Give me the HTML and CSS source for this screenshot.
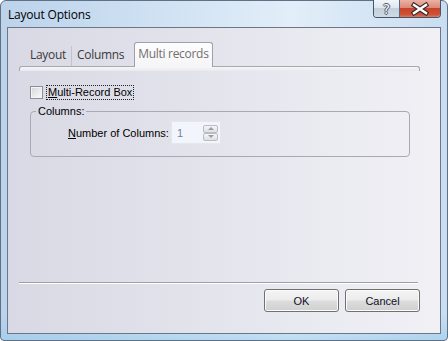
FILE: index.html
```html
<!DOCTYPE html>
<html>
<head>
<meta charset="utf-8">
<title>Layout Options</title>
<link rel="stylesheet" href="styles.css">
</head>
<body>
<div class="window">
  <div class="titlebar">
    <span class="title">Layout Options</span>
    <div class="caps">
      <div class="cap help"><span>?</span></div>
      <div class="cap close">
        <svg width="40" height="18" viewBox="0 0 40 18">
          <path d="M14 5 L26 13 M26 5 L14 13" stroke="#3a2a28" stroke-width="4.6" stroke-linecap="square" fill="none"/>
          <path d="M14 5 L26 13 M26 5 L14 13" stroke="#ffffff" stroke-width="2.4" stroke-linecap="square" fill="none"/>
        </svg>
      </div>
    </div>
  </div>
  <div class="client">
    <div class="tabs">
      <div class="tab first">Layout</div>
      <div class="tab-sep"></div>
      <div class="tab">Columns</div>
      <div class="tab selected">Multi records</div>
    </div>
    <div class="tab-strip"></div>

    <div class="check-row">
      <span class="checkbox"></span>
      <span class="focus"><u>M</u>ulti-Record Box</span>
    </div>

    <fieldset class="group">
      <legend>Columns:</legend>
      <div class="field-row">
        <span class="field-label"><u>N</u>umber of Columns:</span>
        <div class="spin">
          <span class="spin-val">1</span>
          <div class="spin-btns">
            <div class="spin-btn up"></div>
            <div class="spin-btn down"></div>
          </div>
        </div>
      </div>
    </fieldset>

    <div class="separator"></div>
    <div class="buttons">
      <button class="btn">OK</button>
      <button class="btn">Cancel</button>
    </div>
  </div>
</div>
</body>
</html>
```

FILE: styles.css
```css
* { box-sizing: border-box; }
html, body { margin: 0; padding: 0; }
body {
  width: 448px;
  height: 341px;
  overflow: hidden;
  background: #ffffff;
  font-family: "Liberation Sans", Arial, sans-serif;
  font-size: 11px;
  color: #000;
}

.window {
  width: 448px;
  height: 341px;
  border: 1px solid #5f7184;
  border-radius: 6px 6px 4px 4px;
  background:
    linear-gradient(to bottom, rgba(255,255,255,0) 0%, rgba(255,255,255,0) 92%, rgba(140,200,235,0.45) 100%),
    linear-gradient(to right, #bcd3eb 0%, #d2e3f4 40%, #e2eef9 65%, #c9ddf1 100%);
  display: flex;
  flex-direction: column;
  padding: 0 6px 6px 6px;
}

.titlebar {
  height: 26px;
  display: flex;
  align-items: center;
  justify-content: space-between;
  flex: none;
}
.title {
  font-family: "Open Sans", "Noto Sans", sans-serif;
  font-size: 12px;
  color: #000;
  padding-left: 1px;
  letter-spacing: -0.2px;
}

.caps {
  align-self: flex-start;
  margin-top: -1px;
  display: flex;
  height: 18px;
  border: 1px solid #46566a;
  border-top: none;
  border-radius: 0 0 4px 4px;
  overflow: hidden;
}
.cap { height: 100%; display: flex; align-items: center; justify-content: center; }
.help {
  width: 26px;
  border-right: 1px solid #5a697a;
  background: linear-gradient(to bottom, #f2f6fa 0%, #dfe7ef 45%, #c3cfdb 50%, #cfdae5 100%);
}
.help span {
  font-family: "DejaVu Sans", sans-serif;
  font-size: 14px;
  line-height: 14px;
  color: #f4f7fa;
  text-shadow: 1px 0 0 #4d5864, -1px 0 0 #4d5864, 0 1px 0 #4d5864, 0 -1px 0 #4d5864;
}
.close {
  width: 40px;
  background: linear-gradient(to bottom, #eab3a6 0%, #dd8a76 45%, #c8432c 50%, #cd5237 85%, #dc7a5a 100%);
}
.close svg { display: block; }

.client {
  flex: 1;
  border: 1px solid #6c7785;
  background: linear-gradient(to right, #d9d9e5 0%, #e2e2eb 40%, #ebebf2 75%, #f0f0f5 100%);
  display: flex;
  flex-direction: column;
  padding: 14px 0 21px 11px;
}

.tabs {
  display: flex;
  align-items: flex-end;
  height: 24px;
  width: 401px;
  position: relative;
  z-index: 1;
  font-family: "Open Sans", "Noto Sans", sans-serif;
  font-size: 12px;
  letter-spacing: -0.3px;
}
.tab {
  padding: 0 5px;
  height: 22px;
  line-height: 22px;
  color: #3a3a3a;
}
.tab.first { margin-left: 6px; }
.tab-sep {
  width: 1px;
  height: 20px;
  background: #c3c3cb;
}
.tab.selected {
  margin-left: 5px;
  height: 25px;
  margin-bottom: -1px;
  padding: 0 3px 0 3px;
  line-height: 22px;
  border: 1px solid #9ea1a9;
  border-bottom: none;
  border-radius: 3px 3px 0 0;
  background: linear-gradient(to bottom, #fdfdfd, #f5f5f7);
  color: #707070;
}

.tab-strip {
  width: 401px;
  height: 5px;
  flex: none;
  border: 1px solid #a7a7af;
  border-bottom: none;
  border-radius: 3px 3px 0 0;
  background: linear-gradient(to bottom, #f7f7f9, #e9e9ee);
}

.check-row {
  display: flex;
  align-items: center;
  height: 15px;
  margin-top: 14px;
  margin-left: 11px;
}
.checkbox {
  width: 13px;
  height: 13px;
  border: 1px solid #8e8f95;
  background: linear-gradient(135deg, #d6d6da 0%, #ececee 60%, #fafafa 100%);
  box-shadow: inset 0 0 0 1px #f4f4f6;
}
.focus {
  margin-left: 3px;
  padding: 0 1px;
  height: 15px;
  line-height: 13px;
  border: 1px dotted #222;
}
.focus u, .field-label u { text-decoration: underline; text-underline-offset: 1px; }

.group {
  margin: 5px 0 0 11px;
  padding: 3px 0 12px 0;
  width: 380px;
  border: 1px solid #a9a9b3;
  border-radius: 4px;
  min-inline-size: 0;
}
.group legend {
  margin-left: 5px;
  padding: 0 2px;
  line-height: 13px;
  font-size: 11px;
}
.field-row {
  display: flex;
  align-items: center;
  padding-left: 37px;
}
.field-label { width: 103px; }
.spin {
  width: 50px;
  height: 23px;
  border: 1px solid #e3e7ee;
  background: #f2f5fc;
  display: flex;
  align-items: center;
}
.spin-val {
  padding-left: 5px;
  color: #7080a0;
}
.spin-btns {
  margin-left: auto;
  margin-right: 2px;
  display: flex;
  flex-direction: column;
}
.spin-btn {
  width: 15px;
  height: 8px;
  border: 1px solid #b9bcc4;
  border-radius: 2px;
  background: linear-gradient(to bottom, #f6f6f6, #dedfe2);
  display: flex;
  align-items: center;
  justify-content: center;
}
.spin-btn::after {
  content: "";
  width: 0;
  height: 0;
  border-left: 3px solid transparent;
  border-right: 3px solid transparent;
}
.spin-btn.up::after { border-bottom: 3px solid #9a9ca2; }
.spin-btn.down::after { border-top: 3px solid #9a9ca2; }

.separator {
  margin-top: auto;
  width: 399px;
  height: 2px;
  flex: none;
  border-top: 1px solid #a0a0a4;
  border-bottom: 1px solid #ffffff;
}

.buttons {
  margin-top: 5px;
  display: flex;
  justify-content: flex-end;
  gap: 6px;
  padding-right: 20px;
}
.btn {
  width: 75px;
  height: 23px;
  margin: 0;
  padding: 0;
  border: 1px solid #707070;
  border-radius: 3px;
  background: linear-gradient(to bottom, #f4f4f4 0%, #ececec 48%, #dddddd 52%, #cfcfcf 100%);
  box-shadow: inset 0 0 0 1px #fbfbfb;
  font-family: "Liberation Sans", Arial, sans-serif;
  font-size: 11px;
  color: #10102a;
}
```
